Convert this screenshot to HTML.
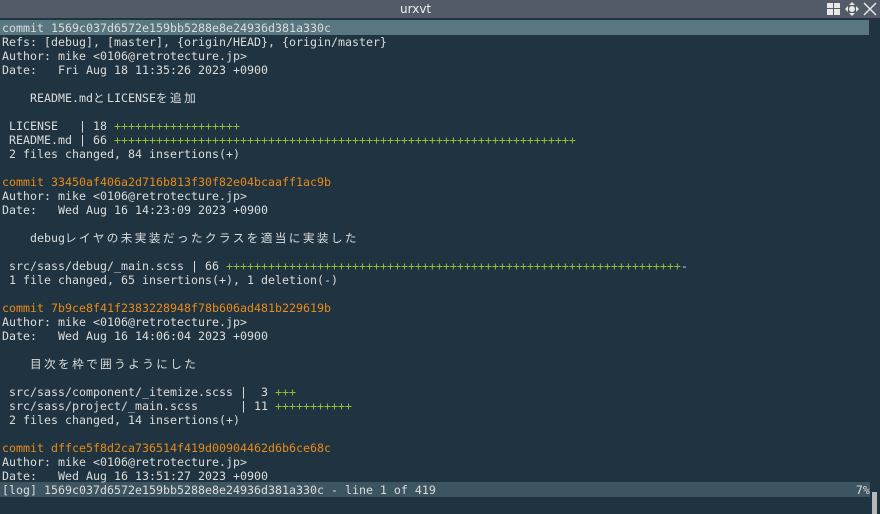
<!DOCTYPE html>
<html><head><meta charset="utf-8"><style>
html,body{margin:0;padding:0;width:880px;height:514px;overflow:hidden;background:#1f3440;}
#tb{position:absolute;left:0;top:0;width:880px;height:18px;background:#535b69;}
#tb .t{position:absolute;left:400px;top:2px;color:#f0f0f0;font:12px "DejaVu Sans",sans-serif;}
#term{position:absolute;left:2px;top:21px;font-family:"DejaVu Sans Mono","Noto Sans CJK JP",monospace;font-size:11.63px;line-height:14px;color:#dcdcdc;white-space:pre;}
.l{height:14px;}
.hl{background:#587780;width:867px;margin-left:-2px;padding-left:2px;margin-top:-1px;padding-top:1px;}
.o{color:#e88a1a;}
.g{color:#8fbf3a;}
.j{letter-spacing:2.4px;}
#st{position:absolute;left:0;top:482px;width:870px;height:15px;background:#3d5561;}
#sb{position:absolute;left:872px;top:492px;width:5px;height:22px;background:#b8b8b8;}
</style></head><body>
<div id="tb"><span class="t">urxvt</span>
<svg style="position:absolute;left:826px;top:2px" width="52" height="14" viewBox="0 0 52 14">
<g fill="#e8e8e8"><rect x="1" y="1" width="6" height="5"/><rect x="8" y="1" width="6" height="5"/><rect x="1" y="7" width="6" height="6"/><rect x="8" y="7" width="6" height="6"/>
<polygon points="26,0 29,3 23,3"/><polygon points="26,14 29,11 23,11"/><polygon points="19,7 22,4 22,10"/><polygon points="33,7 30,4 30,10"/><circle cx="26" cy="7" r="3"/></g>
<path d="M38 1 L50 13 M50 1 L38 13" stroke="#e8e8e8" stroke-width="1.5"/></svg>
</div>
<div id="st"></div>
<div id="sb"></div>
<div id="term"><div class="l hl">commit 1569c037d6572e159bb5288e8e24936d381a330c</div><div class="l">Refs: [debug], [master], {origin/HEAD}, {origin/master}</div><div class="l">Author: mike &lt;0106@retrotecture.jp&gt;</div><div class="l">Date:   Fri Aug 18 11:35:26 2023 +0900</div><div class="l"> </div><div class="l">    README.md<span class="j">と</span>LICENSE<span class="j">を追加</span></div><div class="l"> </div><div class="l"> LICENSE   | 18 <span class="g">++++++++++++++++++</span></div><div class="l"> README.md | 66 <span class="g">++++++++++++++++++++++++++++++++++++++++++++++++++++++++++++++++++</span></div><div class="l"> 2 files changed, 84 insertions(+)</div><div class="l"> </div><div class="l o">commit 33450af406a2d716b813f30f82e04bcaaff1ac9b</div><div class="l">Author: mike &lt;0106@retrotecture.jp&gt;</div><div class="l">Date:   Wed Aug 16 14:23:09 2023 +0900</div><div class="l"> </div><div class="l">    debug<span class="j">レイヤの未実装だったクラスを適当に実装した</span></div><div class="l"> </div><div class="l"> src/sass/debug/_main.scss | 66 <span class="g">+++++++++++++++++++++++++++++++++++++++++++++++++++++++++++++++++</span>-</div><div class="l"> 1 file changed, 65 insertions(+), 1 deletion(-)</div><div class="l"> </div><div class="l o">commit 7b9ce8f41f2383228948f78b606ad481b229619b</div><div class="l">Author: mike &lt;0106@retrotecture.jp&gt;</div><div class="l">Date:   Wed Aug 16 14:06:04 2023 +0900</div><div class="l"> </div><div class="l">    <span class="j">目次を枠で囲うようにした</span></div><div class="l"> </div><div class="l"> src/sass/component/_itemize.scss |  3 <span class="g">+++</span></div><div class="l"> src/sass/project/_main.scss      | 11 <span class="g">+++++++++++</span></div><div class="l"> 2 files changed, 14 insertions(+)</div><div class="l"> </div><div class="l o">commit dffce5f8d2ca736514f419d00904462d6b6ce68c</div><div class="l">Author: mike &lt;0106@retrotecture.jp&gt;</div><div class="l">Date:   Wed Aug 16 13:51:27 2023 +0900</div><div class="l">[log] 1569c037d6572e159bb5288e8e24936d381a330c - line 1 of 419                                                            7%</div></div>
</body></html>
